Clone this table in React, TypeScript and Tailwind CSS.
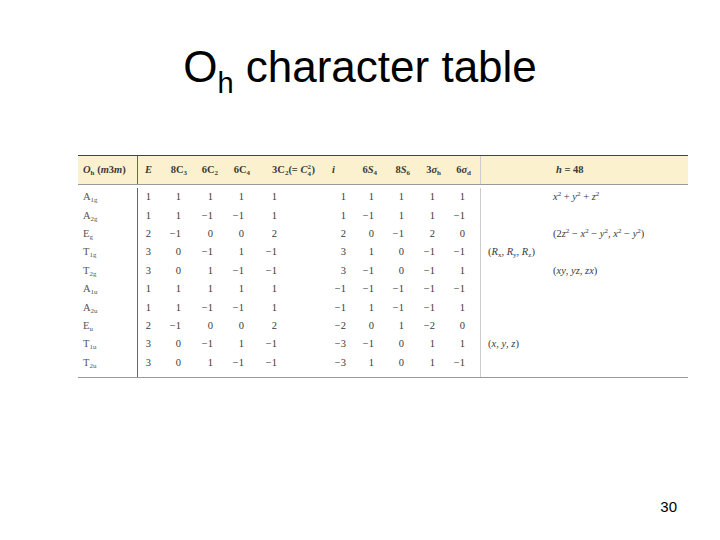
import React from 'react';

type Cell = React.ReactNode;

// column classes: width, header padding, value padding
const cols = [
  { w: 'w-[59px]', head: 'pl-[5px] text-left', val: 'pl-[5px] text-left' },
  { w: 'w-[21px] border-l border-[#666]', head: 'pr-[6px] text-right', val: 'pr-[7px] text-right' },
  { w: 'w-[32px]', head: 'pr-[3px] text-right', val: 'pr-[9px] text-right' },
  { w: 'w-[31px]', head: 'pr-[3px] text-right', val: 'pr-[8px] text-right' },
  { w: 'w-[33px]', head: 'pr-[4px] text-right', val: 'pr-[10px] text-right' },
  { w: 'w-[66px]', head: 'pr-[5px] text-right', val: 'pr-[43px] text-right' },
  { w: 'w-[30px]', head: 'pr-[15px] text-right', val: 'pr-[4px] text-right' },
  { w: 'w-[30px]', head: 'pr-[3px] text-right', val: 'pr-[6px] text-right' },
  { w: 'w-[32px]', head: 'pr-[2px] text-right', val: 'pr-[8px] text-right' },
  { w: 'w-[31px]', head: 'pr-[2px] text-right', val: 'pr-[8px] text-right' },
  { w: 'w-[37px]', head: 'pr-[9px] text-right', val: 'pr-[15px] text-right' },
];

const Sub = ({ children }: { children: React.ReactNode }) => (
  <span className="relative top-[2px] text-[7px] leading-none">{children}</span>
);
const Sup = ({ children }: { children: React.ReactNode }) => (
  <span className="relative top-[-4px] text-[7px] leading-none">{children}</span>
);
const I = ({ children }: { children: React.ReactNode }) => <i>{children}</i>;

const headers: Cell[] = [
  <>
    <I>O</I>
    <Sub>h</Sub> (<I>m</I>3<I>m</I>)
  </>,
  <I>E</I>,
  <>
    8C<Sub>3</Sub>
  </>,
  <>
    6C<Sub>2</Sub>
  </>,
  <>
    6C<Sub>4</Sub>
  </>,
  <>
    3C<Sub>2</Sub>(= <I>C</I>
    <span className="relative inline-block w-[4px] text-[7px] leading-none">
      <span className="absolute left-0 top-[-9px]">2</span>
      <span className="absolute left-0 top-[-2px]">4</span>
    </span>
    )
  </>,
  <I>i</I>,
  <>
    6<I>S</I>
    <Sub>4</Sub>
  </>,
  <>
    8<I>S</I>
    <Sub>6</Sub>
  </>,
  <>
    3<I>σ</I>
    <Sub>h</Sub>
  </>,
  <>
    6<I>σ</I>
    <Sub>d</Sub>
  </>,
];

const m = '−';

const rows: { label: Cell; vals: string[]; lin?: Cell; quad?: Cell }[] = [
  {
    label: <>A<Sub>1g</Sub></>,
    vals: ['1', '1', '1', '1', '1', '1', '1', '1', '1', '1'],
    quad: <><I>x</I><Sup>2</Sup> + <I>y</I><Sup>2</Sup> + <I>z</I><Sup>2</Sup></>,
  },
  { label: <>A<Sub>2g</Sub></>, vals: ['1', '1', m + '1', m + '1', '1', '1', m + '1', '1', '1', m + '1'] },
  {
    label: <>E<Sub>g</Sub></>,
    vals: ['2', m + '1', '0', '0', '2', '2', '0', m + '1', '2', '0'],
    quad: (
      <>
        (2<I>z</I><Sup>2</Sup> − <I>x</I><Sup>2</Sup> − <I>y</I><Sup>2</Sup>, <I>x</I><Sup>2</Sup> − <I>y</I>
        <Sup>2</Sup>)
      </>
    ),
  },
  {
    label: <>T<Sub>1g</Sub></>,
    vals: ['3', '0', m + '1', '1', m + '1', '3', '1', '0', m + '1', m + '1'],
    lin: <>(<I>R</I><Sub>x</Sub>, <I>R</I><Sub>y</Sub>, <I>R</I><Sub>z</Sub>)</>,
  },
  {
    label: <>T<Sub>2g</Sub></>,
    vals: ['3', '0', '1', m + '1', m + '1', '3', m + '1', '0', m + '1', '1'],
    quad: <>(<I>xy</I>, <I>yz</I>, <I>zx</I>)</>,
  },
  { label: <>A<Sub>1u</Sub></>, vals: ['1', '1', '1', '1', '1', m + '1', m + '1', m + '1', m + '1', m + '1'] },
  { label: <>A<Sub>2u</Sub></>, vals: ['1', '1', m + '1', m + '1', '1', m + '1', '1', m + '1', m + '1', '1'] },
  { label: <>E<Sub>u</Sub></>, vals: ['2', m + '1', '0', '0', '2', m + '2', '0', '1', m + '2', '0'] },
  {
    label: <>T<Sub>1u</Sub></>,
    vals: ['3', '0', m + '1', '1', m + '1', m + '3', m + '1', '0', '1', '1'],
    lin: <>(<I>x</I>, <I>y</I>, <I>z</I>)</>,
  },
  { label: <>T<Sub>2u</Sub></>, vals: ['3', '0', '1', m + '1', m + '1', m + '3', '1', '0', '1', m + '1'] },
];

function CharacterTable() {
  return (
    <div
      className="ml-[78px] w-[610px] text-[10.5px] text-[#3a3a3a]"
      style={{ fontFamily: '"Liberation Serif", "Times New Roman", serif' }}
    >
      {/* Header band */}
      <div className="flex h-[30px] items-center border-t-[1.5px] border-b border-t-[#444] border-b-[#999] bg-[#fcf1cf] font-bold">
        {headers.map((h, i) => (
          <div key={i} className={`${cols[i].w} ${cols[i].head} flex h-full items-center ${i === 0 ? '' : 'justify-end'}`}>
            <span className="whitespace-nowrap">{h}</span>
          </div>
        ))}
        <div className="flex h-full flex-1 items-center border-l border-[#ccc] pl-[75px]">
          <span>
            <I>h</I> = 48
          </span>
        </div>
      </div>

      {/* Body */}
      <div className="flex flex-col border-b border-[#999]">
        {rows.map((r, ri) => (
          <div key={ri} className={`flex items-center ${ri === 0 ? 'h-[21.33px] pt-[3px]' : 'h-[18.4px]'}`}>
            <div className={`${cols[0].w} ${cols[0].val} flex h-full items-center text-[#555]`}>
              <span>{r.label}</span>
            </div>
            {r.vals.map((v, vi) => (
              <div
                key={vi}
                className={`${cols[vi + 1].w} ${cols[vi + 1].val} flex h-full items-center justify-end whitespace-nowrap`}
              >
                <span>{v}</span>
              </div>
            ))}
            <div className="flex h-full w-[68px] items-center whitespace-nowrap border-l border-[#ccc] pl-[7px]">
              <span>{r.lin}</span>
            </div>
            <div className="flex h-full flex-1 items-center whitespace-nowrap pl-[5px]">
              <span>{r.quad}</span>
            </div>
          </div>
        ))}
        <div className="flex h-[5px]">
          <div className="w-[59px]" />
          <div className="w-[343px] border-l border-[#666]" />
          <div className="flex-1 border-l border-[#ccc]" />
        </div>
      </div>
    </div>
  );
}

export default function App() {
  return (
    <div
      className="flex h-[540px] w-[720px] flex-col bg-white text-black"
      style={{ fontFamily: '"Liberation Sans", Arial, sans-serif' }}
    >
      <h1 className="mt-[45px] text-center text-[44px] font-normal leading-none">
        O<span className="relative top-[11px] text-[29px]">h</span> character table
      </h1>
      <div className="mt-[66px]">
        <CharacterTable />
      </div>
      <div className="mt-auto mb-[26px] pr-[43px] text-right text-[15px] leading-none">30</div>
    </div>
  );
}
